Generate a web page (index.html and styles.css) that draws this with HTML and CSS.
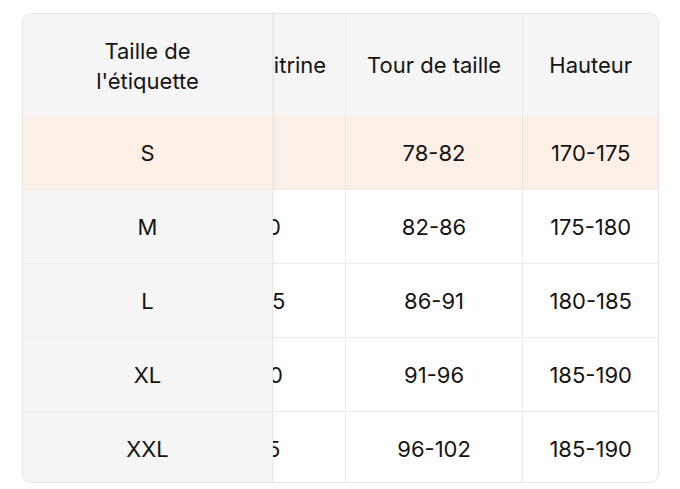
FILE: index.html
```html
<!DOCTYPE html>
<html lang="fr">
<head>
<meta charset="utf-8">
<title>Guide des tailles</title>
<link rel="stylesheet" href="styles.css">
</head>
<body>
<div class="card">
  <table class="fixed">
    <tr class="head"><th><span class="wrap">Taille de l'étiquette</span></th></tr>
    <tr class="hl"><td>S</td></tr>
    <tr><td>M</td></tr>
    <tr><td>L</td></tr>
    <tr><td>XL</td></tr>
    <tr class="last"><td>XXL</td></tr>
  </table>
  <div class="pane">
    <table class="data">
      <tr class="head"><th class="c1">Tour de poitrine</th><th class="c2">Tour de taille</th><th class="c3">Hauteur</th></tr>
      <tr class="hl"><td>86-91</td><td>78-82</td><td>170-175</td></tr>
      <tr><td>96-100</td><td>82-86</td><td>175-180</td></tr>
      <tr><td>100-105</td><td>86-91</td><td>180-185</td></tr>
      <tr><td>105-110</td><td>91-96</td><td>185-190</td></tr>
      <tr class="last"><td>110-115</td><td>96-102</td><td>185-190</td></tr>
    </table>
  </div>
</div>
</body>
</html>
```

FILE: styles.css
```css
html, body {
  margin: 0;
  padding: 0;
  background: #ffffff;
}
body {
  padding: 13px 21px 0 22px;
  font-family: Inter, "Noto Sans", "Liberation Sans", sans-serif;
  font-size: 22px;
  color: #141414;
}
.card {
  display: flex;
  width: 637px;
  height: 470px;
  box-sizing: border-box;
  border: 1px solid #e6e6e6;
  border-radius: 9px;
  overflow: hidden;
  box-shadow: 0 1px 3px rgba(0, 0, 0, 0.05);
}
table {
  border-collapse: collapse;
  border-spacing: 0;
}
th, td {
  padding: 0;
  text-align: center;
  vertical-align: middle;
  font-weight: 400;
  line-height: 30px;
  white-space: nowrap;
}
tr.head th { height: 102px; background: #f5f5f5; }
tr td { height: 73px; border-top: 1px solid #ececec; }
tr.hl td { height: 73px; background: #fcefe5; border-top: none; }
tr.last td { height: 73px; }

.fixed {
  width: 250px;
  flex: none;
  position: relative;
  z-index: 1;
  border-right: 1px solid #e9e9e9;
  box-shadow: 2px 0 3px rgba(0, 0, 0, 0.03);
}
.fixed td { background: #f5f5f5; }
.fixed tr.hl td { background: #fcefe5; }
.wrap {
  display: block;
  white-space: normal;
  width: 130px;
  margin: 2px auto 0;
}

.pane {
  flex: 1;
  overflow: hidden;
}
.data {
  margin-left: -126px;
}
.data th, .data td { border-left: 1px solid #ececec; }
.data tr.hl td { border-left-color: #f3e4da; }
.data th:first-child, .data td:first-child { border-left: none; }
.data td.c1, .data tr td:first-child { padding-right: 4px; }
.c1 { width: 194px; padding-right: 4px; }
.c2 { width: 177px; }
.c3 { width: 135px; }
```
